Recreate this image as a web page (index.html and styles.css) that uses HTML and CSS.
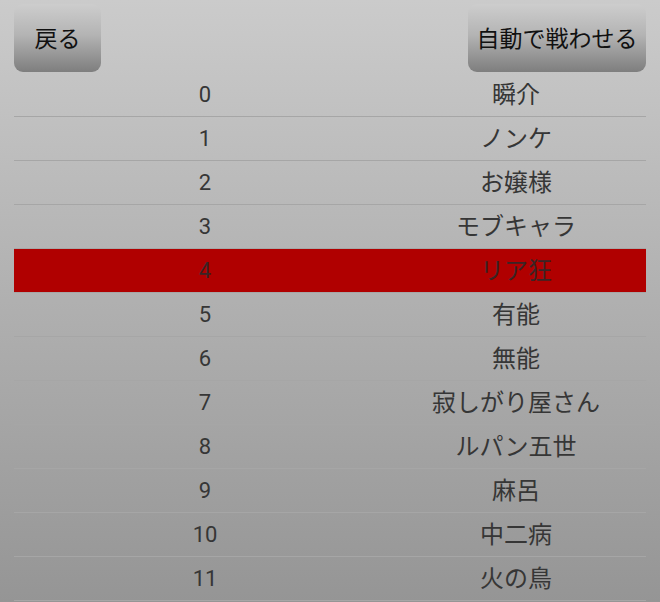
FILE: index.html
```html
<!DOCTYPE html>
<html lang="ja">
<head>
<meta charset="utf-8">
<title>一覧</title>
<link rel="stylesheet" href="styles.css">
</head>
<body>
<div class="screen">
  <div class="topbar">
    <button class="btn btn-back">戻る</button>
    <button class="btn btn-auto">自動で戦わせる</button>
  </div>
  <div class="list">
    <div class="row"><span class="num">0</span><span class="name">瞬介</span></div>
    <div class="row"><span class="num">1</span><span class="name">ノンケ</span></div>
    <div class="row"><span class="num">2</span><span class="name">お嬢様</span></div>
    <div class="row"><span class="num">3</span><span class="name">モブキャラ</span></div>
    <div class="row selected"><span class="num">4</span><span class="name">リア狂</span></div>
    <div class="row"><span class="num">5</span><span class="name">有能</span></div>
    <div class="row"><span class="num">6</span><span class="name">無能</span></div>
    <div class="row"><span class="num">7</span><span class="name">寂しがり屋さん</span></div>
    <div class="row"><span class="num">8</span><span class="name">ルパン五世</span></div>
    <div class="row"><span class="num">9</span><span class="name">麻呂</span></div>
    <div class="row"><span class="num">10</span><span class="name">中二病</span></div>
    <div class="row"><span class="num">11</span><span class="name">火の鳥</span></div>
  </div>
</div>
</body>
</html>
```

FILE: styles.css
```css
html, body {
  margin: 0;
  padding: 0;
}
body {
  width: 660px;
  height: 602px;
  overflow: hidden;
  background: linear-gradient(to bottom, #cbcbcb 0%, #959595 100%);
  font-family: Roboto, "Noto Sans CJK JP", sans-serif;
}
.screen {
  display: flex;
  flex-direction: column;
  padding: 0 14px;
}
.topbar {
  height: 73px;
  display: flex;
  justify-content: space-between;
  align-items: flex-start;
  padding-top: 4px;
  box-sizing: border-box;
}
.btn {
  height: 68px;
  border: none;
  border-radius: 9px;
  background: linear-gradient(to bottom, #cdcdcd 0%, #b4b4b4 45%, #7e7e7e 100%);
  font-family: "Noto Sans CJK JP", sans-serif;
  font-size: 23px;
  line-height: 1;
  color: #111;
  padding: 0 0 2px 0;
  display: flex;
  align-items: center;
  justify-content: center;
}
.btn-back {
  width: 87px;
}
.btn-auto {
  width: 178px;
}
.list {
  display: flex;
  flex-direction: column;
}
.row {
  display: grid;
  grid-template-columns: 382px 1fr;
  align-items: center;
  height: 43px;
  border-bottom: 1px solid #a6a6a6;
  color: #363636;
}
.row .num {
  text-align: center;
  font-family: Roboto, sans-serif;
  font-size: 22px;
  line-height: 1;
  padding-top: 1px;
}
.row .name {
  text-align: center;
  padding-right: 10px;
  padding-bottom: 3px;
  font-family: "Noto Sans CJK JP", sans-serif;
  font-size: 24px;
  line-height: 1;
}
.row.selected {
  background: #b00000;
  color: #3a2424;
}
```
